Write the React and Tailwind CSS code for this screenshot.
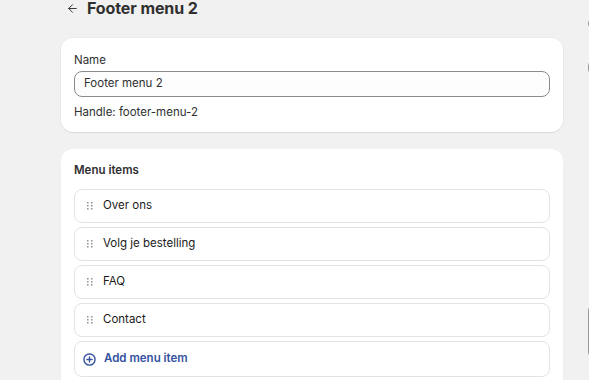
import { ArrowLeft } from 'lucide-react';

const items = ['Over ons', 'Volg je bestelling', 'FAQ', 'Contact'];

function DragHandle() {
  return (
    <svg width="6" height="8" viewBox="0 0 6 8" className="text-[#8a8a8a]">
      {[0, 3, 6].map(y =>
        [0, 4].map(x => <rect key={`${x}-${y}`} x={x} y={y} width="1.6" height="1.6" rx="0.4" fill="currentColor" />)
      )}
    </svg>
  );
}

export default function App() {
  return (
    <div
      className="h-[380px] w-[589px] overflow-hidden bg-[#f1f1f1] flex text-[#303030]"
      style={{ fontFamily: 'Inter, "Noto Sans", sans-serif' }}
    >
      {/* ── Main column ── */}
      <div className="w-[502px] ml-[61px] shrink-0">
        <div className="h-[16px] flex items-center gap-[8px] pl-[5px]">
          <ArrowLeft size={13} strokeWidth={1.75} className="text-[#303030]" />
          <h1 className="text-[16px] font-bold leading-[16px] tracking-[-0.1px] text-[#303030]">Footer menu 2</h1>
        </div>

        {/* Name card */}
        <div className="mt-[22px] bg-white rounded-[12px] shadow-[0_1px_1px_rgba(0,0,0,0.08),0_0_0_1px_rgba(0,0,0,0.02)] px-[13px] pt-[14px] pb-[12px]">
          <label className="block text-[11.5px] leading-[16px] mb-[3px]">Name</label>
          <div className="h-[26px] rounded-[8px] border border-[#8a8a8a] bg-[#fdfdfd] flex items-center px-[9px] text-[11.5px]">
            Footer menu 2
          </div>
          <p className="mt-[7px] text-[11.5px] leading-[16px]">Handle: footer-menu-2</p>
        </div>

        {/* Menu items card */}
        <div className="mt-[17px] bg-white rounded-t-[12px] shadow-[0_1px_1px_rgba(0,0,0,0.08)] px-[13px] pt-[13px] pb-[12px]">
          <h2 className="text-[11.5px] leading-[16px] font-semibold mb-[11px]">Menu items</h2>
          <div className="flex flex-col gap-[4px]">
            {items.map(it => (
              <div key={it} className="h-[34px] rounded-[8px] border border-[#e3e3e3] flex items-center pl-[12px] gap-[10px] text-[11.5px] text-[#1a1a1a]">
                <DragHandle />
                {it}
              </div>
            ))}
            <div className="h-[36px] rounded-[8px] border border-[#e3e3e3] flex items-center pl-[8px] gap-[8px] text-[11.5px] font-semibold text-[#34529e]">
              <svg width="13" height="13" viewBox="0 0 14 14" fill="none" stroke="currentColor" strokeWidth="1.5">
                <circle cx="7" cy="7" r="6" />
                <path d="M7 4.2v5.6M4.2 7h5.6" strokeLinecap="round" />
              </svg>
              Add menu item
            </div>
          </div>
        </div>
      </div>

      {/* ── Right column, cut off ── */}
      <div className="ml-[25px] w-[20px] shrink-0 flex flex-col">
        <div className="mt-[18px] h-[11px] rounded-l-[6px] border-l-2 border-[#9a9a9a]" />
        <div className="mt-[31px] h-[15px] rounded-l-[6px] border-l-2 border-[#9a9a9a]" />
        <div className="mt-[230px] h-[53px] rounded-l-[6px] border-l-2 border-[#9a9a9a]" />
      </div>
    </div>
  );
}
